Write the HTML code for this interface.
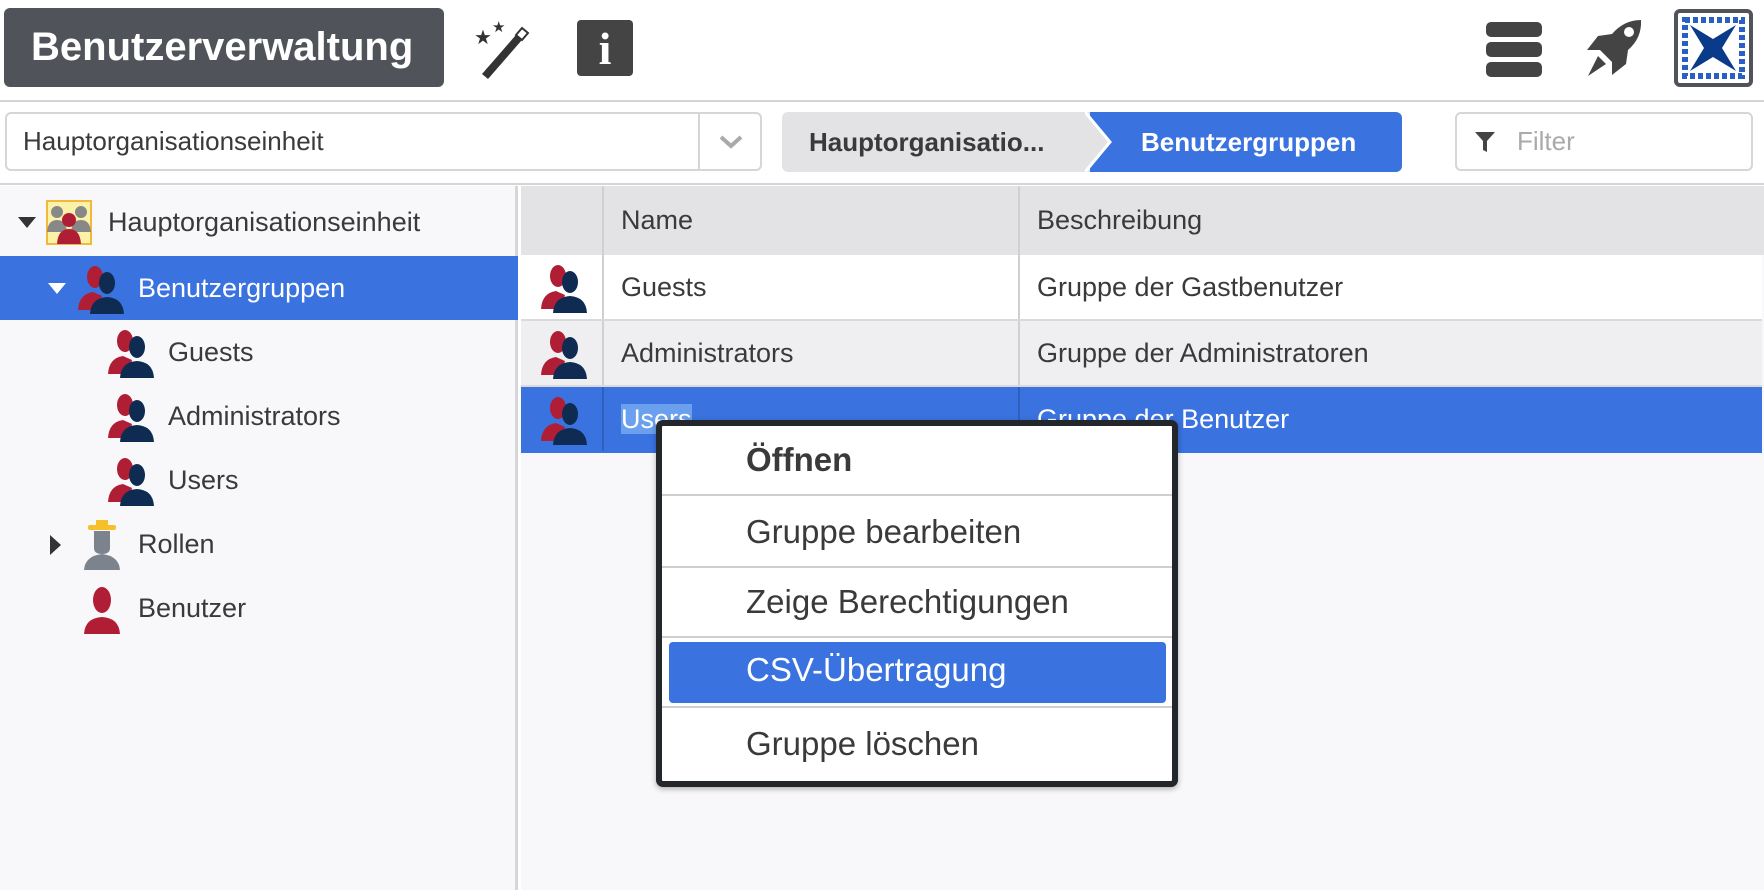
<!DOCTYPE html>
<html><head><meta charset="utf-8"><style>
*{box-sizing:border-box;margin:0;padding:0}
body{width:1764px;height:890px;background:#fff;font-family:"Liberation Sans",sans-serif;color:#3a3a3a;position:relative;overflow:hidden}
.a{position:absolute}
.title{left:4px;top:8px;width:440px;height:79px;background:#50535a;border-radius:6px;color:#fff;font-weight:bold;font-size:40px;line-height:79px;padding-left:27px}
.hline{left:0;width:1764px;height:2px;background:#d4d4d6}
.sel{left:5px;top:112px;width:757px;height:59px;border:2px solid #d6d6d8;border-radius:6px;font-size:26px;line-height:55px;padding-left:16px}
.sel .dd{position:absolute;right:0;top:0;width:62px;height:55px;border-left:2px solid #d6d6d8}
.bc1{left:782px;top:112px;width:330px;height:60px;background:#e3e3e5;border-radius:6px 0 0 6px;font-weight:bold;font-size:26px;line-height:60px;padding-left:27px;color:#3a3a3a}
.bc2{left:1090px;top:112px;width:312px;height:60px;background:#3a72e0;border-radius:0 6px 6px 0;font-weight:bold;font-size:26px;line-height:60px;color:#fff;padding-left:51px}
.filter{left:1455px;top:112px;width:298px;height:59px;border:2px solid #d6d6d8;border-radius:6px;font-size:26px;line-height:55px;padding-left:60px;color:#aaa}
.left{left:0;top:186px;width:518px;height:704px;background:#f8f8fa;border-right:3px solid #d6d6d8}
.tr{position:absolute;left:0;width:518px;height:64px;font-size:27px;line-height:64px}
.right{left:521px;top:186px;width:1243px;height:704px;background:#f8f8fa}
.th{left:521px;top:186px;width:1243px;height:69px;background:#e3e3e5;font-size:27px;line-height:69px}
.row{position:absolute;left:521px;width:1241px;height:66px;font-size:27px;line-height:64px;border-bottom:2px solid #dadadc}
.c1{position:absolute;left:0;width:83px;height:100%;border-right:2px solid #d0d0d2}
.c2{position:absolute;left:83px;width:416px;height:100%;border-right:2px solid #d0d0d2;padding-left:17px}
.c3{position:absolute;left:499px;padding-left:17px}
.menu{left:656px;top:420px;width:522px;height:367px;background:#fff;border:6px solid #23262b;border-radius:7px;box-shadow:0 2px 6px rgba(0,0,0,.3)}
.mi{position:absolute;left:0;width:510px;height:70px;font-size:33px;line-height:68px;padding-left:84px;border-bottom:2px solid #cfcfd1;color:#3a3a3a}
</style></head><body>
<svg width="0" height="0" style="position:absolute"><defs>
<g id="grp"><ellipse cx="19" cy="13" rx="8" ry="11" fill="#b01e35"/><path d="M2 46 Q3 30 17 28 L26 32 L22 46Z" fill="#b01e35"/><ellipse cx="31" cy="19" rx="8" ry="11" fill="#0f2b52"/><path d="M14 50 Q15 34 31 33 Q47 34 48 50Z" fill="#0f2b52"/></g>
</defs></svg>
<div class="a title">Benutzerverwaltung</div>
<svg class="a" style="left:472px;top:18px" width="68" height="62" viewBox="0 0 68 62"><path d="M10 56 L50 10 L56 15 L16 61Z" fill="#333"/><path d="M44 17 L50 10 L56 15 L50 22Z" fill="#fff" stroke="#333" stroke-width="2"/><text x="2" y="26" font-size="20" fill="#333">★</text><text x="20" y="14" font-size="15" fill="#333">★</text></svg>
<div class="a" style="left:577px;top:20px;width:56px;height:56px;background:#444;border-radius:4px;color:#fff;font:bold 46px 'Liberation Serif',serif;text-align:center;line-height:58px">i</div>
<div class="a" style="left:1486px;top:22px;width:56px;height:15px;background:#444;border-radius:5px"></div>
<div class="a" style="left:1486px;top:42px;width:56px;height:15px;background:#444;border-radius:5px"></div>
<div class="a" style="left:1486px;top:62px;width:56px;height:15px;background:#444;border-radius:5px"></div>
<svg class="a" style="left:1584px;top:18px" width="60" height="60" viewBox="0 0 60 60"><path d="M57 2 Q40 2 28 16 L14 18 L3 32 L16 32 L28 44 L28 57 L42 46 L44 32 Q58 20 57 2Z" fill="#444"/><circle cx="45" cy="14" r="5" fill="#fff"/><path d="M4 58 L14 38 L22 46Z" fill="#444"/></svg>
<div class="a" style="left:1674px;top:9px;width:79px;height:78px;border:4px solid #50535a;border-radius:6px;background:#fff"></div>
<svg class="a" style="left:1682px;top:17px" width="63" height="62" viewBox="0 0 63 62"><rect x="3" y="3" width="57" height="56" fill="none" stroke="#2a5fc4" stroke-width="6" stroke-dasharray="5 3"/><path d="M8 8 L31 22 L54 8 L40 31 L54 54 L31 40 L8 54 L22 31Z" fill="#0a3a8a"/></svg>
<div class="a hline" style="top:100px"></div>
<div class="a sel">Hauptorganisationseinheit<div class="dd"><svg style="position:absolute;left:18px;top:18px" width="26" height="20"><path d="M3 5 L13 14 L23 5" stroke="#aaa" stroke-width="4" fill="none"/></svg></div></div>
<div class="a bc1">Hauptorganisatio...</div>
<div class="a bc2">Benutzergruppen</div>
<svg class="a" style="left:1085px;top:112px" width="30" height="60"><path d="M0 0 L25 30 L0 60Z" fill="#e3e3e5"/><path d="M0 0 L25 30 L0 60" stroke="#fff" stroke-width="3" fill="none"/></svg>
<div class="a filter">Filter</div>
<svg class="a" style="left:1474px;top:131px" width="22" height="22"><path d="M1 1 H21 L13 10 V21 L9 19 V10Z" fill="#444"/></svg>
<div class="a hline" style="top:183px"></div>
<div class="a left">
<div class="tr" style="top:4px"><svg style="position:absolute;left:18px;top:27px" width="18" height="12"><path d="M0 0H18L9 11Z" fill="#333"/></svg><div style="position:absolute;left:46px;top:10px;width:46px;height:45px;background:#fbf1a8;border:2px solid #f0b93a"></div><svg style="position:absolute;left:47px;top:12px" width="44" height="42" viewBox="0 0 44 42"><circle cx="10" cy="10" r="6" fill="#888"/><path d="M0 30 Q1 18 10 18 Q19 18 20 30Z" fill="#888"/><circle cx="34" cy="10" r="6" fill="#888"/><path d="M24 30 Q25 18 34 18 Q43 18 44 30Z" fill="#888"/><circle cx="22" cy="18" r="7" fill="#b01e35"/><path d="M10 42 Q11 27 22 27 Q33 27 34 42Z" fill="#b01e35"/></svg><span style="position:absolute;left:108px">Hauptorganisationseinheit</span></div>
<div class="tr" style="top:70px;background:#3a72e0;color:#fff"><svg style="position:absolute;left:48px;top:27px" width="18" height="12"><path d="M0 0H18L9 11Z" fill="#fff"/></svg><svg style="position:absolute;left:76px;top:8px" width="50" height="50"><use href="#grp"/></svg><span style="position:absolute;left:138px">Benutzergruppen</span></div>
<div class="tr" style="top:134px"><svg style="position:absolute;left:106px;top:8px" width="50" height="50"><use href="#grp"/></svg><span style="position:absolute;left:168px">Guests</span></div>
<div class="tr" style="top:198px"><svg style="position:absolute;left:106px;top:8px" width="50" height="50"><use href="#grp"/></svg><span style="position:absolute;left:168px">Administrators</span></div>
<div class="tr" style="top:262px"><svg style="position:absolute;left:106px;top:8px" width="50" height="50"><use href="#grp"/></svg><span style="position:absolute;left:168px">Users</span></div>
<div class="tr" style="top:326px"><svg style="position:absolute;left:50px;top:23px" width="12" height="20"><path d="M0 0V20L11 10Z" fill="#333"/></svg><svg style="position:absolute;left:82px;top:8px" width="40" height="50" viewBox="0 0 40 50"><rect x="14" y="0" width="12" height="6" fill="#f5c02a"/><rect x="6" y="5" width="28" height="5" rx="2" fill="#f5c02a"/><path d="M12 11 H28 V28 Q28 34 20 34 Q12 34 12 28Z" fill="#7c838c"/><path d="M2 50 Q3 36 20 34 Q37 36 38 50Z" fill="#7c838c"/></svg><span style="position:absolute;left:138px">Rollen</span></div>
<div class="tr" style="top:390px"><svg style="position:absolute;left:82px;top:8px" width="40" height="50" viewBox="0 0 40 50"><ellipse cx="20" cy="16" rx="9" ry="13" fill="#b01e35"/><path d="M2 50 Q3 34 20 33 Q37 34 38 50Z" fill="#b01e35"/></svg><span style="position:absolute;left:138px">Benutzer</span></div>
</div>
<div class="a right"></div>
<div class="a th"><div class="c1" style="border-color:#d0d0d2"></div><div class="c2">Name</div><div class="c3">Beschreibung</div></div>
<div class="row" style="top:255px;background:#fff"><div class="c1"><svg style="position:absolute;left:18px;top:8px" width="50" height="50"><use href="#grp"/></svg></div><div class="c2">Guests</div><div class="c3">Gruppe der Gastbenutzer</div></div>
<div class="row" style="top:321px;background:#efeff1"><div class="c1"><svg style="position:absolute;left:18px;top:8px" width="50" height="50"><use href="#grp"/></svg></div><div class="c2">Administrators</div><div class="c3">Gruppe der Administratoren</div></div>
<div class="row" style="top:387px;background:#3a72e0;color:#fff;border-color:#3a72e0"><div class="c1" style="border-color:#2f5fbf"><svg style="position:absolute;left:18px;top:8px" width="50" height="50"><use href="#grp"/></svg></div><div class="c2" style="border-color:#2f5fbf"><span style="background:#6aa0ee">Users</span></div><div class="c3">Gruppe der Benutzer</div></div>
<div class="a menu">
<div class="mi" style="top:0;font-weight:bold">Öffnen</div>
<div class="mi" style="top:72px">Gruppe bearbeiten</div>
<div class="mi" style="top:142px">Zeige Berechtigungen</div>
<div class="mi" style="top:212px;height:70px"><div style="position:absolute;left:7px;top:4px;width:497px;height:61px;background:#3a72e0;border-radius:4px"></div><span style="position:relative;color:#fff;top:-2px">CSV-Übertragung</span></div>
<div class="mi" style="top:284px;border:none">Gruppe löschen</div>
</div>
</body></html>
